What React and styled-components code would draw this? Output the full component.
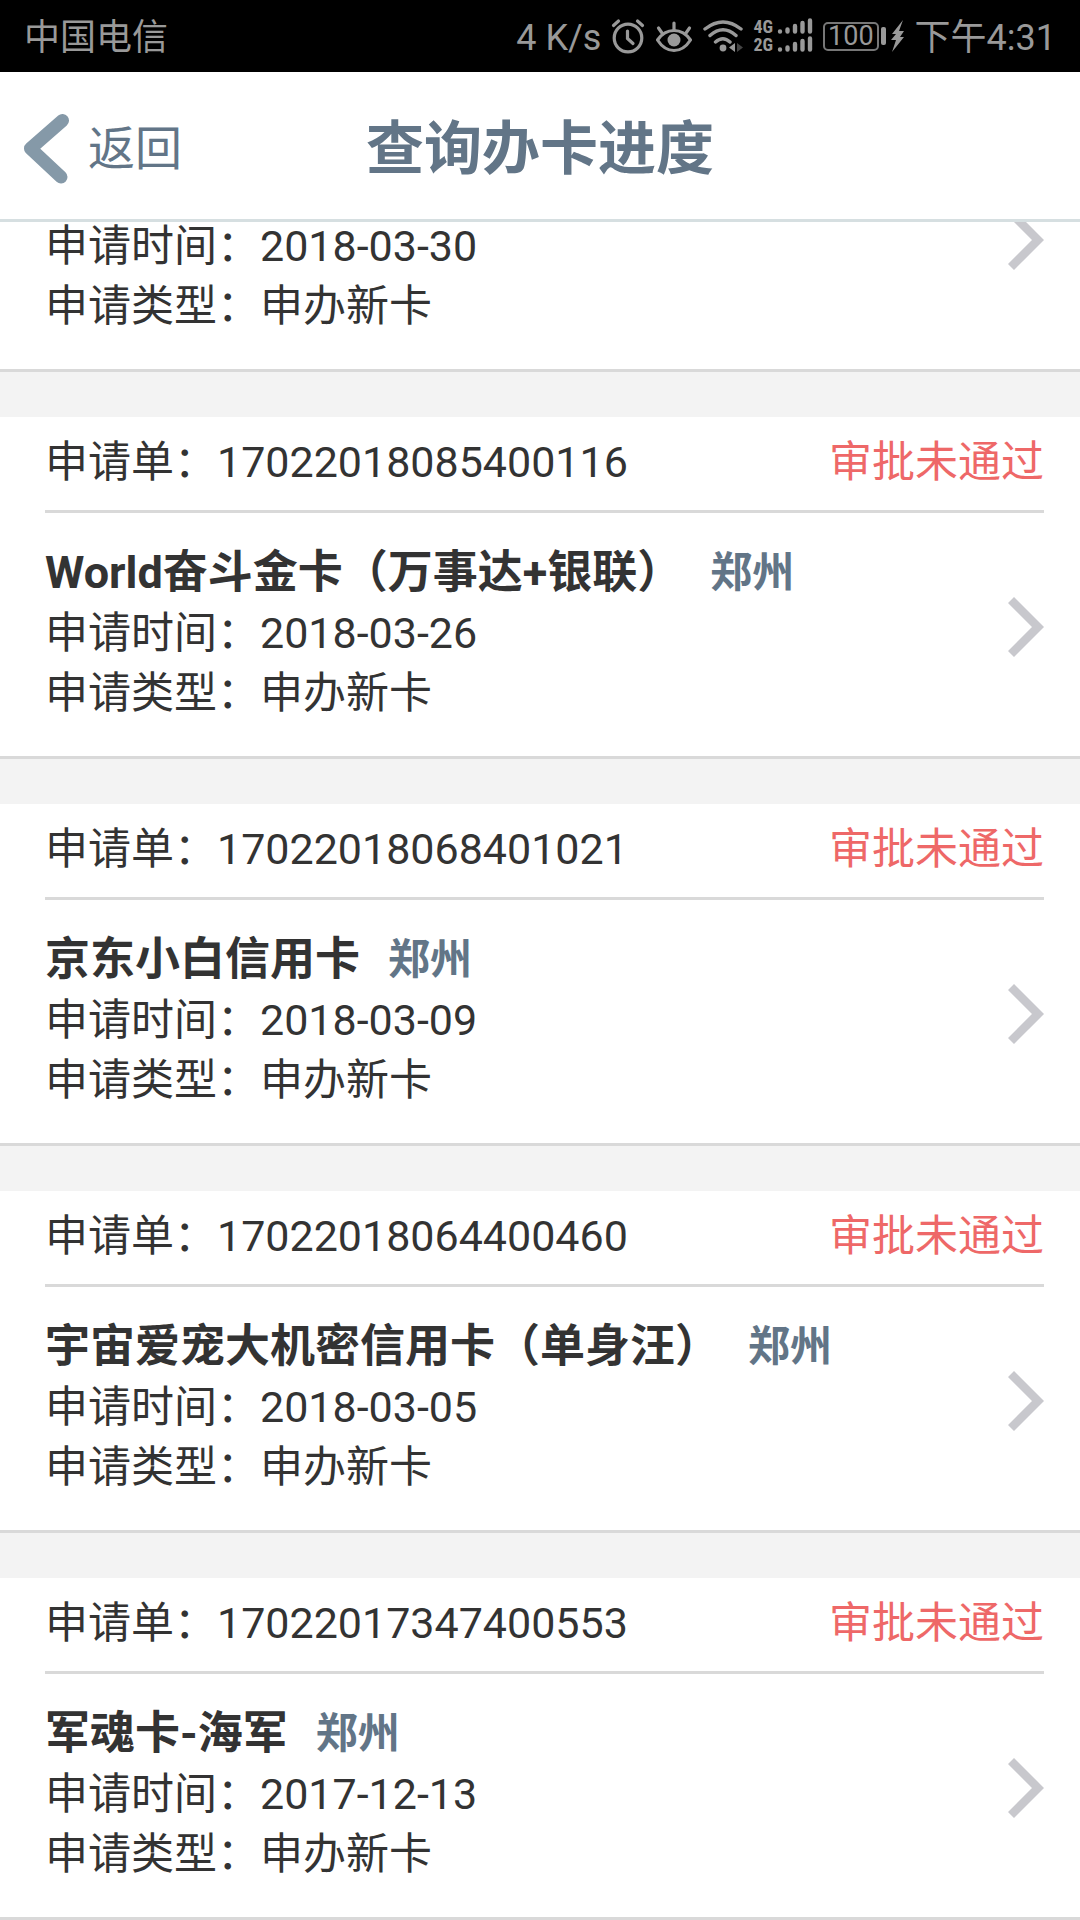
import React, { useLayoutEffect, useRef } from "react"
import styled, { createGlobalStyle } from "styled-components"

const GlobalStyle = createGlobalStyle`
  * {
    box-sizing: border-box;
  }
  body {
    margin: 0;
    background: #f3f3f3;
    color: #333;
    font-family: Roboto, "Noto Sans CJK SC", sans-serif;
  }
`

const Page = styled.div`
  display: flex;
  flex-direction: column;
  height: 100vh;
`

const StatusBar = styled.div`
  display: flex;
  flex: none;
  align-items: center;
  justify-content: space-between;
  height: 72px;
  padding: 0 24px;
  background: #000;
  color: #999;
`
const StatusGroup = styled.div`
  display: flex;
  align-items: center;
  gap: 10px;
  > svg {
    display: block;
    flex: none;
  }
`
const StatusText = styled.span`
  padding-top: 4px;
  font-size: 36px;
  line-height: 48px;
`
const Networks = styled.div`
  display: flex;
  align-items: center;
  gap: 4px;
`
const NetworkLabels = styled.div`
  font-family: "Liberation Sans Narrow", "Roboto Condensed", Roboto, sans-serif;
  font-size: 18px;
  font-weight: bold;
  line-height: 18px;
`
const Power = styled.div`
  display: flex;
  align-items: center;
  gap: 5px;
`
const Battery = styled.div`
  display: flex;
  align-items: center;
  gap: 2px;
  &:after {
    content: "";
    width: 5px;
    height: 18px;
    border-radius: 2px;
    background: #999;
  }
`
const BatteryLevel = styled.span`
  padding: 0 3px;
  border: 2px solid #777;
  border-radius: 5px;
  font-size: 27px;
  line-height: 25px;
`

const HeaderWrapper = styled.header`
  display: grid;
  flex: none;
  grid-template-columns: 1fr auto 1fr;
  align-items: center;
  height: 150px;
  padding: 6px 24px 0;
  background: #fff;
  border-bottom: 3px solid #d6dfe1;
  color: #627587;
  > h1 {
    margin: 0;
    font-size: 58px;
    line-height: 72px;
  }
`
const BackButton = styled.button`
  display: flex;
  align-items: center;
  justify-self: start;
  gap: 18px;
  padding: 0;
  border: 0;
  background: none;
  color: inherit;
  font-family: inherit;
  font-size: 47px;
  line-height: 60px;
`

const OrderList = styled.main`
  display: flex;
  flex: 1;
  flex-direction: column;
  gap: 45px;
  min-height: 0;
  overflow-y: auto;
  scrollbar-width: none;
`
const Card = styled.article`
  flex: none;
  background: #fff;
  border-bottom: 3px solid #d9d9d9;
  font-size: 43px;
  line-height: 60px;
`
const CardTop = styled.div`
  display: flex;
  align-items: center;
  justify-content: space-between;
  min-height: 96px;
  margin: 0 36px 0 45px;
  padding-bottom: 4px;
  border-bottom: 3px solid #d9d9d9;
`
const Status = styled.span`
  color: #ee6868;
`
const CardBody = styled.a`
  display: flex;
  align-items: center;
  justify-content: space-between;
  padding: 0 36px 15px 45px;
  color: inherit;
  text-decoration: none;
`
const CardText = styled.div`
  padding: 30px 0 18px;
`
const CardName = styled.div`
  display: flex;
  align-items: center;
  gap: 28px;
  min-height: 60px;
  > h2 {
    margin: 0;
    font-size: 45px;
  }
`
const City = styled.span`
  color: #627587;
  font-size: 42px;
  font-weight: bold;
`

const orders = [
  { date: "2018-03-30" },
  {
    number: "17022018085400116",
    name: "World奋斗金卡（万事达+银联）",
    date: "2018-03-26",
  },
  { number: "17022018068401021", name: "京东小白信用卡", date: "2018-03-09" },
  {
    number: "17022018064400460",
    name: "宇宙爱宠大机密信用卡（单身汪）",
    date: "2018-03-05",
  },
  { number: "17022017347400553", name: "军魂卡-海军", date: "2017-12-13" },
]

const AlarmIcon = () => (
  <svg width="34" height="36" viewBox="0 0 34 36" fill="none" stroke="#999" strokeWidth="3.2" strokeLinecap="round">
    <circle cx="17" cy="20" r="13.8" />
    <path d="M16.5 13v7.5l5.5 5M2.5 7.5l5-4.5M31.5 7.5l-5-4.5" />
  </svg>
)

const EyeIcon = () => (
  <svg width="38" height="36" viewBox="0 0 38 36" fill="none" stroke="#999" strokeWidth="3.2" strokeLinecap="round">
    <path d="M2.5 22C7 15.500 12 12.500 19 12.500S31 15.500 35.500 22C31 29 26 32.500 19 32.500S7 29 2.500 22z" strokeLinejoin="round" />
    <path d="M19 12V5M7 15L3.500 10M31 15l3.500-5" />
    <circle cx="19" cy="22" r="6.500" fill="#999" stroke="none" />
  </svg>
)

const WifiIcon = () => (
  <svg width="40" height="36" viewBox="0 0 40 36" fill="none" stroke="#999" strokeWidth="3.4" strokeLinecap="round">
    <path d="M2 11Q20-3 38 11M7 17.500Q20 6 33 17.500M12.500 24Q20 17.500 27 24" />
    <circle cx="20" cy="30" r="3.400" fill="#999" stroke="none" />
    <path d="M32 25v9l-6-4.500z" fill="#999" stroke="none" />
    <path d="M34 25v9l6-4.500z" fill="#444" stroke="none" />
  </svg>
)

const SignalIcon = () => (
  <svg width="36" height="36" viewBox="0 0 36 36" stroke="#999" strokeWidth="4.400" strokeLinecap="round">
    <path d="M3 13.500v.1M10.500 11.500v2M18 8v5.500M25.500 5v8.500M33 2.500v11M3 31.500v.1M10.500 29.500v2M18 26v5.500M25.500 23v8.500M33 20.500v11" />
  </svg>
)

const BoltIcon = () => (
  <svg width="14" height="32" viewBox="0 0 14 32" fill="#999">
    <path d="M12 0L1 14h4L0 20h5L1 32l12-15H9l4-6H8z" />
  </svg>
)

const BackIcon = () => (
  <svg width="46" height="70" viewBox="0 0 46 70" fill="none" stroke="#8599a8" strokeWidth="13" strokeLinecap="round" strokeLinejoin="round">
    <path d="M38.500 6.500L6.500 34.500 37 63" />
  </svg>
)

const ChevronIcon = () => (
  <svg width="36" height="60" viewBox="0 0 36 60" fill="none" stroke="#c8c8cd" strokeWidth="8.500">
    <path d="M3 3l27 27L3 57" />
  </svg>
)

const Order = ({ number, name, date }) => (
  <Card>
    <CardTop>
      {!!number && (
        <>
          <span>申请单：{number}</span>
          <Status>审批未通过</Status>
        </>
      )}
    </CardTop>
    <CardBody href="#detail">
      <CardText>
        <CardName>
          {!!name && (
            <>
              <h2>{name}</h2>
              <City>郑州</City>
            </>
          )}
        </CardName>
        <div>申请时间：{date}</div>
        <div>申请类型：申办新卡</div>
      </CardText>
      <ChevronIcon />
    </CardBody>
  </Card>
)

const App = () => {
  const listRef = useRef(null)

  // open on the oldest orders
  useLayoutEffect(() => {
    listRef.current.scrollTop = listRef.current.scrollHeight
  }, [])

  return (
    <Page>
      <GlobalStyle />
      <StatusBar>
        <StatusText>中国电信</StatusText>
        <StatusGroup>
          <StatusText>4 K/s</StatusText>
          <AlarmIcon />
          <EyeIcon />
          <WifiIcon />
          <Networks>
            <NetworkLabels>
              <div>4G</div>
              <div>2G</div>
            </NetworkLabels>
            <SignalIcon />
          </Networks>
          <Power>
            <Battery>
              <BatteryLevel>100</BatteryLevel>
            </Battery>
            <BoltIcon />
          </Power>
          <StatusText>下午4:31</StatusText>
        </StatusGroup>
      </StatusBar>
      <HeaderWrapper>
        <BackButton type="button">
          <BackIcon />
          返回
        </BackButton>
        <h1>查询办卡进度</h1>
      </HeaderWrapper>
      <OrderList ref={listRef}>
        {orders.map(order => (
          <Order key={order.date} {...order} />
        ))}
      </OrderList>
    </Page>
  )
}

export default App
